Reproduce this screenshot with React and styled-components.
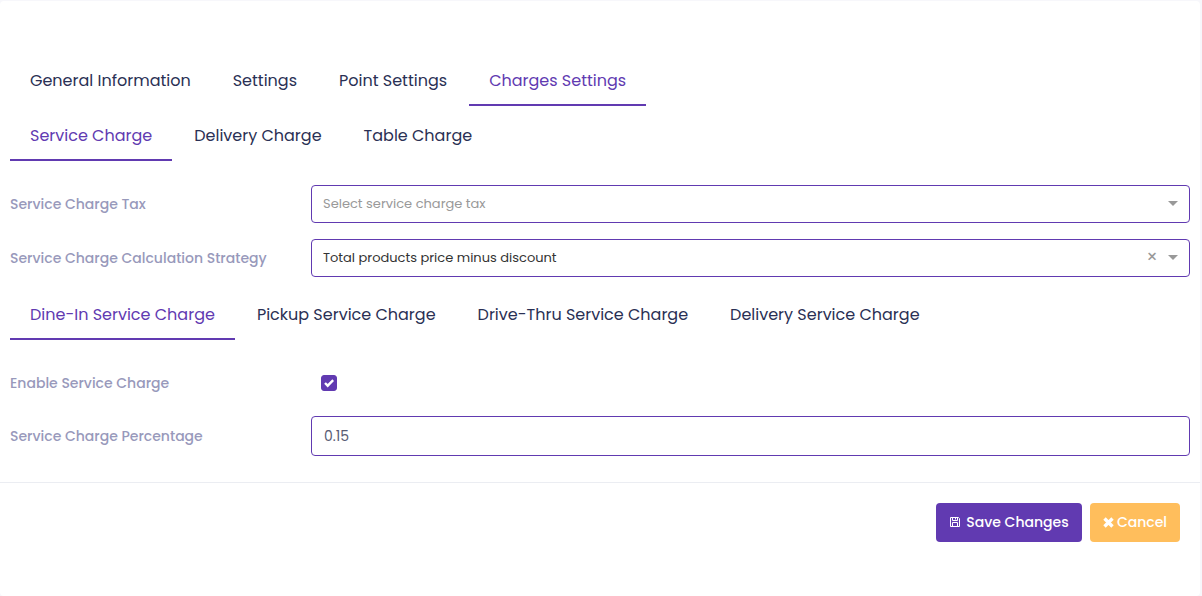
import { useState } from 'react'
import styled, { createGlobalStyle } from 'styled-components'

const GlobalStyle = createGlobalStyle`
  * {
    box-sizing: border-box;
  }
  body {
    margin: 0;
    background: #f7f7fb;
    font-family: Poppins, Inter, sans-serif;
    font-size: 14px;
  }
  button, input, select {
    font-family: inherit;
  }
`
const Card = styled.form`
  min-height: calc(100vh - 1px);
  margin: 1px 2px 0 0;
  padding-top: 55px;
  border-radius: 4px;
  background: #fff;
`
const CardBody = styled.div`
  padding: 0 10px 26px;
`
const TabList = styled.div`
  display: flex;
  gap: 2px;
  margin-bottom: 5px;
`
const Tab = styled.button`
  height: 50px;
  padding: 2px 20px 0;
  border: 0;
  border-bottom: 2px solid ${p => (p.$active ? '#613ab1' : 'transparent')};
  background: none;
  color: ${p => (p.$active ? '#613ab1' : '#2a3054')};
  font-size: 16px;
  line-height: 24px;
  white-space: nowrap;
  cursor: pointer;
`
const Fields = styled.div`
  display: flex;
  flex-direction: column;
  gap: ${p => (p.$checks ? '23px' : '16px')};
  padding: ${p => (p.$checks ? '28px 0 0' : '19px 0 13px')};
`
const Row = styled.div`
  display: grid;
  grid-template-columns: 1fr 3fr;
  align-items: center;
  gap: 8px;
`
const Label = styled.label`
  color: #9899bb;
  font-size: 14px;
  font-weight: 500;
  line-height: 20px;
  white-space: nowrap;
`
const SelectBox = styled.div`
  position: relative;
`
const Select = styled.select`
  display: block;
  width: 100%;
  height: 38px;
  padding: 0 50px 2px 11px;
  border: 1px solid #613ab1;
  border-radius: 4px;
  appearance: none;
  background: #fff;
  color: ${p => (p.$empty ? '#999' : '#333')};
  font-size: 13px;
`
const Caret = styled.span`
  position: absolute;
  top: 16px;
  right: 12px;
  border: 5px solid transparent;
  border-top-color: #999;
  border-bottom: 0;
  pointer-events: none;
`
const Clear = styled.button`
  position: absolute;
  top: 10px;
  right: 30px;
  width: 16px;
  height: 16px;
  padding: 0;
  border: 0;
  background: none;
  color: #999;
  font-size: 18px;
  line-height: 16px;
  cursor: pointer;
`
const CheckCell = styled.div`
  display: flex;
  align-items: center;
  height: 20px;
  padding-left: 10px;
`
const CheckBox = styled.span`
  display: grid;
  width: 16px;
  height: 16px;

  > * {
    grid-area: 1 / 1;
    place-self: center;
  }
  svg {
    pointer-events: none;
  }
`
const CheckInput = styled.input`
  width: 16px;
  height: 16px;
  margin: 0;
  border: 1px solid #613ab1;
  border-radius: 3px;
  appearance: none;
  background: #fff;

  &:checked {
    background: #613ab1;
  }
`
const TextInput = styled.input`
  width: 100%;
  height: 40px;
  padding: 0 12px;
  border: 1px solid #613ab1;
  border-radius: 4px;
  background: #fff;
  color: #575b73;
  font-size: 14px;
`
const Footer = styled.div`
  display: flex;
  justify-content: flex-end;
  gap: 8px;
  padding: 20px;
  border-top: 1px solid #ebedf2;
`
const Button = styled.button`
  display: flex;
  align-items: center;
  justify-content: center;
  gap: ${p => (p.$primary ? '5px' : '3px')};
  height: 39px;
  min-width: ${p => (p.$primary ? '146px' : '90px')};
  padding: 0 12px;
  border: 0;
  border-radius: 4px;
  background: ${p => (p.$primary ? '#613ab1' : '#ffbe5c')};
  color: #fff;
  font-size: 14px;
  font-weight: 500;
  cursor: pointer;

  svg {
    margin-bottom: 1px;
    overflow: visible;
  }
`

const SaveIcon = () => (
  <svg width="12" height="12" viewBox="0 0 12 12" fill="none" stroke="currentColor" aria-hidden="true">
    <path d="M1.5 1.5h8l1 1v8h-9z" />
    <path d="M3.5 1.5v3h5v-3M6.5 1.5v2M3.5 10.5v-4h5v4" />
  </svg>
)

const CrossIcon = () => (
  <svg width="11" height="11" viewBox="0 0 11 11" stroke="currentColor" strokeWidth="3.4" aria-hidden="true">
    <path d="M1.5 1.5l8 8M9.5 1.5l-8 8" />
  </svg>
)

const CheckIcon = () => (
  <svg width="10" height="10" viewBox="0 0 10 10" fill="none" stroke="#fff" strokeWidth="2.4" aria-hidden="true">
    <path d="M1 5l2.7 2.7L9.2 2.2" />
  </svg>
)

const Tabs = ({ items, initial = 0 }) => {
  const [active, setActive] = useState(initial)
  return (
    <TabList role="tablist">
      {items.map((item, i) => (
        <Tab
          key={item}
          type="button"
          role="tab"
          aria-selected={i === active}
          $active={i === active}
          onClick={() => setActive(i)}
        >
          {item}
        </Tab>
      ))}
    </TabList>
  )
}

const App = () => {
  const [tax, setTax] = useState('')
  const [strategy, setStrategy] = useState('minus')
  const [enabled, setEnabled] = useState(true)

  return (
    <>
      <GlobalStyle />
      <Card onSubmit={e => e.preventDefault()}>
        <CardBody>
          <Tabs items={['General Information', 'Settings', 'Point Settings', 'Charges Settings']} initial={3} />
          <Tabs items={['Service Charge', 'Delivery Charge', 'Table Charge']} />
          <Fields>
            <Row>
              <Label htmlFor="tax">Service Charge Tax</Label>
              <SelectBox>
                <Select id="tax" value={tax} $empty={!tax} onChange={e => setTax(e.target.value)}>
                  <option value="">Select service charge tax</option>
                </Select>
                <Caret />
              </SelectBox>
            </Row>
            <Row>
              <Label htmlFor="strategy">Service Charge Calculation Strategy</Label>
              <SelectBox>
                <Select
                  id="strategy"
                  value={strategy}
                  $empty={!strategy}
                  onChange={e => setStrategy(e.target.value)}
                >
                  <option value="" />
                  <option value="minus">Total products price minus discount</option>
                </Select>
                {strategy && (
                  <Clear type="button" aria-label="Clear" onClick={() => setStrategy('')}>×</Clear>
                )}
                <Caret />
              </SelectBox>
            </Row>
          </Fields>
          <Tabs
            items={[
              'Dine-In Service Charge',
              'Pickup Service Charge',
              'Drive-Thru Service Charge',
              'Delivery Service Charge',
            ]}
          />
          <Fields $checks>
            <Row>
              <Label htmlFor="enable">Enable Service Charge</Label>
              <CheckCell>
                <CheckBox>
                  <CheckInput
                    id="enable"
                    type="checkbox"
                    checked={enabled}
                    onChange={e => setEnabled(e.target.checked)}
                  />
                  {enabled && <CheckIcon />}
                </CheckBox>
              </CheckCell>
            </Row>
            <Row>
              <Label htmlFor="percentage">Service Charge Percentage</Label>
              <TextInput id="percentage" type="text" defaultValue="0.15" />
            </Row>
          </Fields>
        </CardBody>
        <Footer>
          <Button type="submit" $primary>
            <SaveIcon />
            Save Changes
          </Button>
          <Button type="button">
            <CrossIcon />
            Cancel
          </Button>
        </Footer>
      </Card>
    </>
  )
}

export default App
